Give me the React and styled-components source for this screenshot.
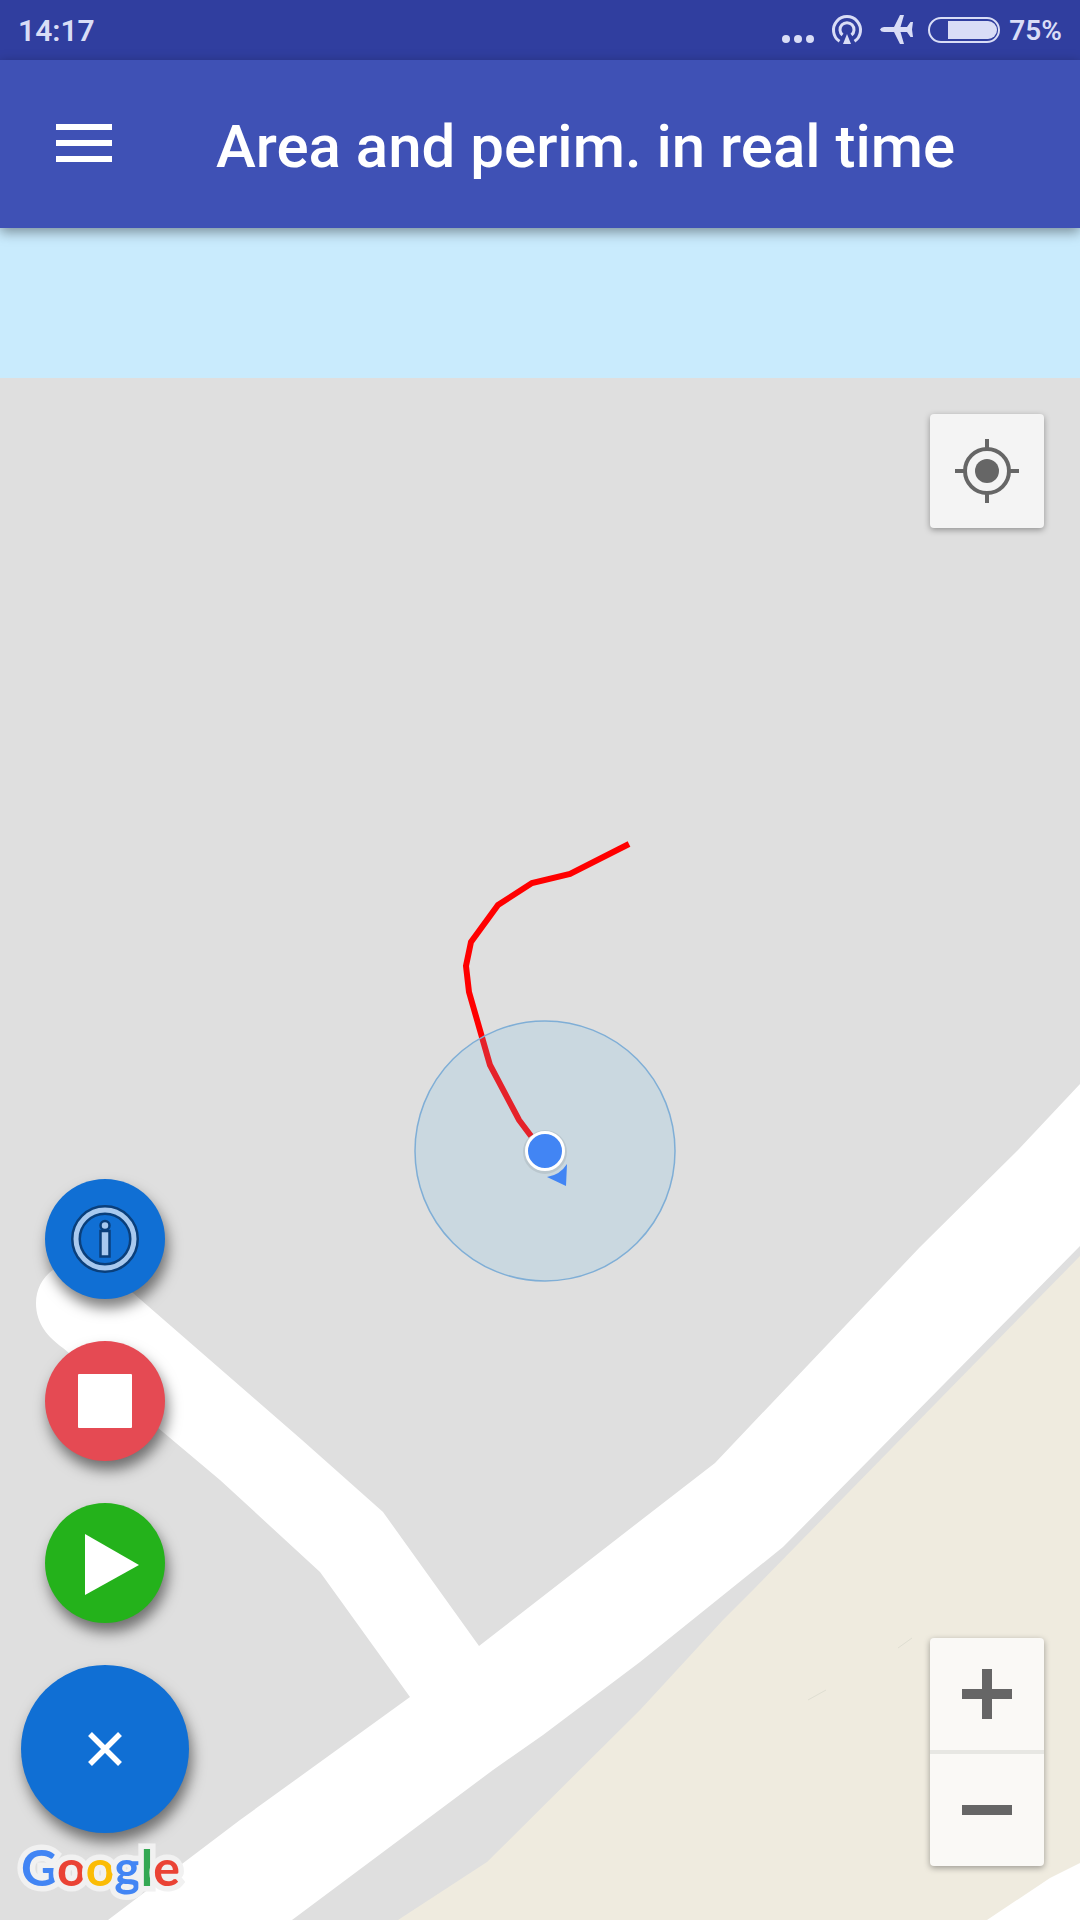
import React from 'react';
import styled, { createGlobalStyle } from 'styled-components';

const color = {
   status: '#303e9f',
   statusText: '#d9ddf6',
   bar: '#3f51b5',
   blue: '#106fd4',
   red: '#e54a53',
   green: '#24b21b',
   icon: '#666666',
   land: '#dfdfdf',
   water: '#c9ebfd',
   sand: '#efebdf',
};

const GlobalStyle = createGlobalStyle`
   * {
      box-sizing: border-box;
   }
   body {
      margin: 0;
      font-family: Roboto, "Liberation Sans", sans-serif;
   }
   button {
      margin: 0;
      padding: 0;
      border: 0;
      cursor: pointer;
   }
   svg {
      display: block;
   }
`;

const Page = styled.div`
   display: flex;
   flex-direction: column;
   min-height: 100vh;
`;

const StatusBar = styled.div`
   display: flex;
   align-items: center;
   justify-content: space-between;
   height: 60px;
   padding: 2px 18px 0;
   background: ${color.status};
   color: ${color.statusText};
`;

const StatusText = styled.span`
   font-size: ${props => props.$size}px;
   font-weight: 600;
   line-height: 36px;
`;

const StatusIcons = styled.div`
   display: flex;
   align-items: center;
   gap: 9px;
`;

const AppBar = styled.header`
   z-index: 1;
   display: flex;
   align-items: center;
   gap: 104px;
   height: 168px;
   padding: 0 56px 2px;
   background: ${color.bar};
   color: white;
   box-shadow: 0 4px 12px rgba(0, 0, 0, 0.4);
`;

const MenuButton = styled.button`
   background: none;
   color: inherit;
`;

const Title = styled.h1`
   margin: 0;
   padding-top: 8px;
   font-size: 60px;
   font-weight: 500;
   line-height: 72px;
   white-space: nowrap;
`;

const MapArea = styled.main`
   position: relative;
   display: flex;
   flex: 1;
   justify-content: space-between;
   overflow: hidden;
   background: ${color.land};
`;

const MapCanvas = styled.svg`
   position: absolute;
   inset: 0;
   width: 100%;
   height: 100%;
`;

const Actions = styled.div`
   position: relative;
   display: flex;
   flex-direction: column;
   align-items: flex-start;
   justify-content: flex-end;
   gap: 42px;
   padding: 0 0 19px 21px;
`;

const ActionButton = styled.button`
   display: flex;
   align-items: center;
   justify-content: center;
   width: ${props => (props.$large ? 168 : 120)}px;
   height: ${props => (props.$large ? 168 : 120)}px;
   margin: 0 ${props => (props.$large ? 0 : 24)}px;
   border-radius: 50%;
   background: ${props => props.$fill};
   box-shadow: 3px 9px 14px rgba(0, 0, 0, 0.5);
`;

const MainAction = styled.div`
   display: flex;
   flex-direction: column;
   align-items: flex-start;
`;

const Logo = styled.div`
   font-family: Lato, sans-serif;
   font-size: 50px;
   font-weight: 700;
   line-height: 68px;
   paint-order: stroke fill;
   -webkit-text-stroke: 11px #f1f1f1;
`;

const Letter = styled.span`
   color: ${props => props.$tint};
`;

const MapControls = styled.div`
   position: relative;
   display: flex;
   flex-direction: column;
   justify-content: space-between;
   padding: 186px 36px 54px 0;
`;

const ControlGroup = styled.div`
   width: 114px;
   border-radius: 4px;
   background: ${props => props.$fill};
   box-shadow: 0 2px 6px rgba(0, 0, 0, 0.35);
`;

const ControlButton = styled.button`
   display: flex;
   align-items: center;
   justify-content: center;
   width: 100%;
   height: ${props => props.$height}px;
   background: none;
`;

const Divider = styled.div`
   height: 4px;
   background: #e7e7e3;
`;

const LOGO = [
   ['G', '#4285f4'],
   ['o', '#ea4335'],
   ['o', '#fbbc05'],
   ['g', '#4285f4'],
   ['l', '#34a853'],
   ['e', '#ea4335'],
];

const Indicators = () => (
   <svg width="216" height="36" viewBox="784 13 216 36" fill={color.statusText} overflow="visible">
      <circle cx="786" cy="39" r="4" />
      <circle cx="798" cy="39" r="4" />
      <circle cx="810" cy="39" r="4" />
      <g fill="none" stroke={color.statusText} strokeWidth="3">
         <path d="M839.5 41.3a13.5 13.5 0 1 1 15 0" />
         <path d="M842.5 35a7 7 0 1 1 9 0" />
      </g>
      <path d="M847 34l4 10h-8z" />
      <path d="M880 29.5q1-2.500 4-2.500h10l6-12h4l-3.500 12h6.500l3.500-5h2.500l-1 7.500 1 7.500h-2.500L907 32h-6.500l3.500 12h-4l-6-12h-10q-3 0-4-2.500z" />
      <rect x="929" y="18" width="70" height="24" rx="12" fill="none" stroke={color.statusText} strokeWidth="2" />
      <path d="M948 21h40a9 9 0 0 1 0 18h-40z" />
   </svg>
);

const MapDrawing = () => (
   <MapCanvas viewBox="0 228 1080 1692" preserveAspectRatio="xMidYMid slice" aria-hidden="true">
      <rect y="228" width="1080" height="150" fill={color.water} />

      {/* open ground south of the road */}
      <path d="M1080 1256L753 1590 723 1620 640 1710 487 1862 398 1920H1080z" fill={color.sand} />
      <path d="M808 1700l18-10M898 1648l14-10" fill="none" stroke="#dfded2" strokeWidth="1" />

      {/* roads */}
      <g fill="white">
         <path d="M1080 1084L1018 1150 920 1247 715 1463 640 1521 479 1646 410 1697 240 1820 108 1920H292L493 1770 543 1735 640 1662 783 1547 873 1456 1080 1246z" />
         <path d="M479 1646L383 1512 302 1440 133 1293 104 1270C66 1250 36 1274 36 1303c0 21 12 34 27 45L220 1480l100 92 90 125 60 20z" />
         <path d="M1080 1863l-30 15-63 42h93z" />
      </g>

      {/* tracked path, current position and its accuracy */}
      <polyline
         points="629,844 570,874 532,883 498,905 471,942 466,966 469,992 490,1065 519,1120 531,1136"
         fill="none"
         stroke="#ff0000"
         strokeWidth="6"
      />
      <circle cx="545" cy="1151" r="130" fill="#6fbceb" fillOpacity="0.18" stroke="#7faed6" strokeWidth="1.5" />
      <circle cx="545" cy="1152" r="22" fill="#000000" fillOpacity="0.08" />
      <circle cx="545" cy="1151" r="18.5" fill="#4285f4" stroke="white" strokeWidth="3" />
      <path d="M547 1177q13-2 20-13l-1 22z" fill="#4285f4" />
   </MapCanvas>
);

const InfoIcon = () => (
   <svg width="68" height="68" viewBox="0 0 68 68">
      <circle cx="34" cy="34" r="29" fill="none" stroke="#0a3f7b" strokeWidth="10" />
      <circle cx="34" cy="34" r="29" fill="none" stroke="#a8c9ef" strokeWidth="5" />
      <circle cx="34" cy="20.5" r="4.5" fill="#a8c9ef" stroke="#0a3f7b" strokeWidth="2.5" />
      <rect x="29.5" y="26" width="9" height="25.5" fill="#a8c9ef" stroke="#0a3f7b" strokeWidth="2.5" />
   </svg>
);

const App = () => (
   <Page>
      <GlobalStyle />
      <StatusBar>
         <StatusText $size={30}>14:17</StatusText>
         <StatusIcons>
            <Indicators />
            <StatusText $size={28}>75%</StatusText>
         </StatusIcons>
      </StatusBar>
      <AppBar>
         <MenuButton aria-label="Menu">
            <svg width="56" height="38" viewBox="0 0 56 38" fill="currentColor">
               <path d="M0 0h56v6H0zM0 16h56v6H0zM0 32h56v6H0z" />
            </svg>
         </MenuButton>
         <Title>Area and perim. in real time</Title>
      </AppBar>
      <MapArea>
         <MapDrawing />
         <Actions>
            <ActionButton $fill={color.blue} aria-label="Info">
               <InfoIcon />
            </ActionButton>
            <ActionButton $fill={color.red} aria-label="Stop">
               <svg width="56" height="56" viewBox="0 0 56 56">
                  <rect x="1" y="1" width="54" height="54" rx="1" fill="white" />
               </svg>
            </ActionButton>
            <ActionButton $fill={color.green} aria-label="Start">
               <svg width="82" height="64" viewBox="0 0 82 64">
                  <path d="M21 3l54 31-54 30z" fill="white" />
               </svg>
            </ActionButton>
            <MainAction>
               <ActionButton $large $fill={color.blue} aria-label="Close">
                  <svg width="34" height="34" viewBox="0 0 34 34">
                     <path d="M2 2l30 30M32 2L2 32" stroke="white" strokeWidth="5.5" />
                  </svg>
               </ActionButton>
               <Logo>
                  {LOGO.map(([letter, tint], i) => (
                     <Letter key={i} $tint={tint}>
                        {letter}
                     </Letter>
                  ))}
               </Logo>
            </MainAction>
         </Actions>
         <MapControls>
            <ControlGroup $fill="#f4f4f4">
               <ControlButton $height={114} aria-label="My location">
                  <svg width="64" height="64" viewBox="0 0 64 64" stroke={color.icon} strokeWidth="4">
                     <circle cx="32" cy="32" r="22" fill="none" />
                     <circle cx="32" cy="32" r="12" fill={color.icon} stroke="none" />
                     <path d="M32 0v10M32 54v10M0 32h10M54 32h10" />
                  </svg>
               </ControlButton>
            </ControlGroup>
            <ControlGroup $fill="#faf9f6">
               <ControlButton $height={112} aria-label="Zoom in">
                  <svg width="50" height="50" viewBox="0 0 50 50" fill={color.icon}>
                     <path d="M20 0h10v20h20v10H30v20H20V30H0V20h20z" />
                  </svg>
               </ControlButton>
               <Divider />
               <ControlButton $height={112} aria-label="Zoom out">
                  <svg width="50" height="10" viewBox="0 0 50 10" fill={color.icon}>
                     <path d="M0 0h50v10H0z" />
                  </svg>
               </ControlButton>
            </ControlGroup>
         </MapControls>
      </MapArea>
   </Page>
);

export default App;
